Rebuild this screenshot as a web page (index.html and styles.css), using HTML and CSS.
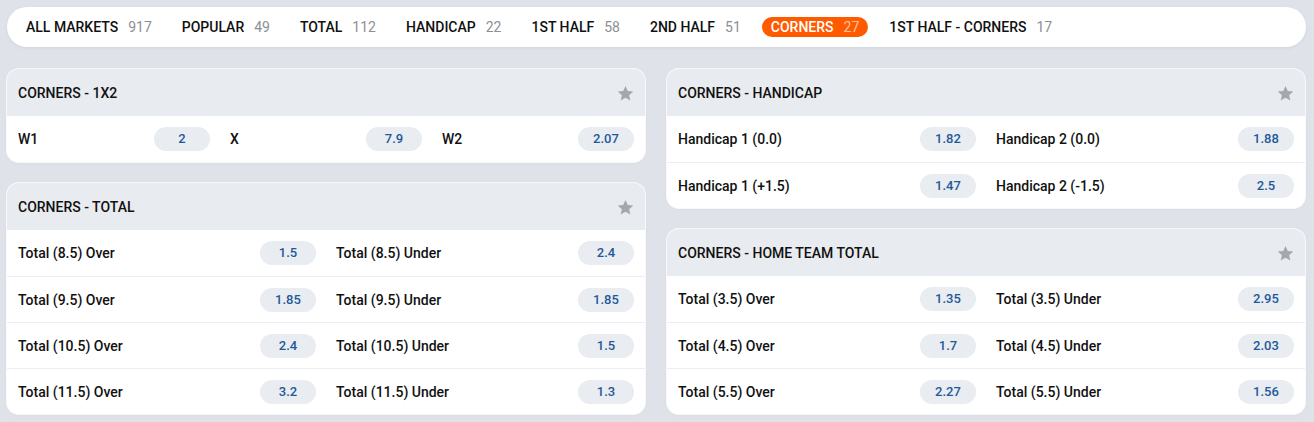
FILE: index.html
```html
<!DOCTYPE html>
<html>
<head>
<meta charset="utf-8">
<link rel="stylesheet" href="styles.css">
</head>
<body>
<nav class="tabs">
  <div class="tab"><span class="tab-name">ALL MARKETS</span><span class="tab-count">917</span></div>
  <div class="tab"><span class="tab-name">POPULAR</span><span class="tab-count">49</span></div>
  <div class="tab"><span class="tab-name">TOTAL</span><span class="tab-count">112</span></div>
  <div class="tab"><span class="tab-name">HANDICAP</span><span class="tab-count">22</span></div>
  <div class="tab"><span class="tab-name">1ST HALF</span><span class="tab-count">58</span></div>
  <div class="tab"><span class="tab-name">2ND HALF</span><span class="tab-count">51</span></div>
  <div class="tab active"><span class="tab-name">CORNERS</span><span class="tab-count">27</span></div>
  <div class="tab"><span class="tab-name">1ST HALF - CORNERS</span><span class="tab-count">17</span></div>
</nav>

<main class="columns">
  <div class="column">
    <section class="card">
      <header class="card-head"><span class="card-title">CORNERS - 1X2</span><svg class="star" viewBox="0 0 24 24"><path d="M12 2.5l2.9 6.3 6.9.7-5.2 4.6 1.5 6.8L12 17.4l-6.1 3.5 1.5-6.8-5.2-4.6 6.9-.7z"/></svg></header>
      <div class="row three">
        <div class="cell"><span class="label">W1</span><span class="odd">2</span></div>
        <div class="cell"><span class="label">X</span><span class="odd">7.9</span></div>
        <div class="cell"><span class="label">W2</span><span class="odd">2.07</span></div>
      </div>
    </section>

    <section class="card">
      <header class="card-head"><span class="card-title">CORNERS - TOTAL</span><svg class="star" viewBox="0 0 24 24"><path d="M12 2.5l2.9 6.3 6.9.7-5.2 4.6 1.5 6.8L12 17.4l-6.1 3.5 1.5-6.8-5.2-4.6 6.9-.7z"/></svg></header>
      <div class="row two">
        <div class="cell"><span class="label">Total (8.5) Over</span><span class="odd">1.5</span></div>
        <div class="cell"><span class="label">Total (8.5) Under</span><span class="odd">2.4</span></div>
      </div>
      <div class="row two">
        <div class="cell"><span class="label">Total (9.5) Over</span><span class="odd">1.85</span></div>
        <div class="cell"><span class="label">Total (9.5) Under</span><span class="odd">1.85</span></div>
      </div>
      <div class="row two">
        <div class="cell"><span class="label">Total (10.5) Over</span><span class="odd">2.4</span></div>
        <div class="cell"><span class="label">Total (10.5) Under</span><span class="odd">1.5</span></div>
      </div>
      <div class="row two">
        <div class="cell"><span class="label">Total (11.5) Over</span><span class="odd">3.2</span></div>
        <div class="cell"><span class="label">Total (11.5) Under</span><span class="odd">1.3</span></div>
      </div>
    </section>
  </div>

  <div class="column">
    <section class="card">
      <header class="card-head"><span class="card-title">CORNERS - HANDICAP</span><svg class="star" viewBox="0 0 24 24"><path d="M12 2.5l2.9 6.3 6.9.7-5.2 4.6 1.5 6.8L12 17.4l-6.1 3.5 1.5-6.8-5.2-4.6 6.9-.7z"/></svg></header>
      <div class="row two">
        <div class="cell"><span class="label">Handicap 1 (0.0)</span><span class="odd">1.82</span></div>
        <div class="cell"><span class="label">Handicap 2 (0.0)</span><span class="odd">1.88</span></div>
      </div>
      <div class="row two">
        <div class="cell"><span class="label">Handicap 1 (+1.5)</span><span class="odd">1.47</span></div>
        <div class="cell"><span class="label">Handicap 2 (-1.5)</span><span class="odd">2.5</span></div>
      </div>
    </section>

    <section class="card">
      <header class="card-head"><span class="card-title">CORNERS - HOME TEAM TOTAL</span><svg class="star" viewBox="0 0 24 24"><path d="M12 2.5l2.9 6.3 6.9.7-5.2 4.6 1.5 6.8L12 17.4l-6.1 3.5 1.5-6.8-5.2-4.6 6.9-.7z"/></svg></header>
      <div class="row two">
        <div class="cell"><span class="label">Total (3.5) Over</span><span class="odd">1.35</span></div>
        <div class="cell"><span class="label">Total (3.5) Under</span><span class="odd">2.95</span></div>
      </div>
      <div class="row two">
        <div class="cell"><span class="label">Total (4.5) Over</span><span class="odd">1.7</span></div>
        <div class="cell"><span class="label">Total (4.5) Under</span><span class="odd">2.03</span></div>
      </div>
      <div class="row two">
        <div class="cell"><span class="label">Total (5.5) Over</span><span class="odd">2.27</span></div>
        <div class="cell"><span class="label">Total (5.5) Under</span><span class="odd">1.56</span></div>
      </div>
    </section>
  </div>
</main>
</body>
</html>
```

FILE: styles.css
```css
* { box-sizing: border-box; }
html, body { margin: 0; }
body {
  background: #dfe3e9;
  font-family: Roboto, "Liberation Sans", Arial, sans-serif;
  color: #111;
  padding: 7px 8px 0 7px;
  width: 1314px;
  height: 422px;
  overflow: hidden;
}
.tabs {
  display: flex;
  align-items: center;
  gap: 12px;
  height: 40px;
  width: 1299px;
  padding: 0 10px;
  background: #fff;
  border-radius: 20px;
  box-shadow: 0 1px 3px rgba(120, 130, 150, 0.15);
}
.tab {
  display: flex;
  align-items: center;
  gap: 10px;
  height: 20px;
  padding: 0 9px;
  border-radius: 10px;
  font-size: 14px;
  line-height: 20px;
}
.tab-name { font-weight: 500; color: #111; }
.tab-count { color: #8c9096; }
.tab.active { background: #ff5a00; }
.tab.active .tab-name { color: #fff; }
.tab.active .tab-count { color: #ffc29c; }

.columns {
  display: grid;
  grid-template-columns: 638px 638px;
  column-gap: 22px;
  margin-top: 22px;
  align-items: start;
}
.column {
  display: flex;
  flex-direction: column;
  gap: 21px;
}
.card {
  background: #fff;
  border-radius: 12px;
  overflow: hidden;
  box-shadow: 0 0 0 1px rgba(255, 255, 255, 0.8), 0 1px 3px rgba(120, 130, 150, 0.12);
}
.card-head {
  display: flex;
  align-items: center;
  justify-content: space-between;
  height: 47px;
  padding: 1px 11px 0;
  background: #e8ebef;
}
.card-title {
  font-size: 14px;
  font-weight: 500;
  color: #111;
}
.star {
  width: 19px;
  height: 19px;
  fill: #a3a8b0;
  margin-right: -1px;
}
.row {
  display: grid;
  height: 46px;
  padding-right: 2px;
}
.row + .row { border-top: 1px solid #eceef1; }
.row.three { grid-template-columns: repeat(3, 212px); }
.row.two { grid-template-columns: repeat(2, 318px); }
.cell {
  display: flex;
  align-items: center;
  justify-content: space-between;
  padding: 0 9px 0 11px;
}
.label {
  font-size: 14px;
  font-weight: 500;
  color: #111;
}
.odd {
  width: 56px;
  height: 24px;
  line-height: 24px;
  border-radius: 12px;
  background: #e9ecf0;
  text-align: center;
  font-size: 13px;
  font-weight: 500;
  color: #1e5a9a;
}
```
